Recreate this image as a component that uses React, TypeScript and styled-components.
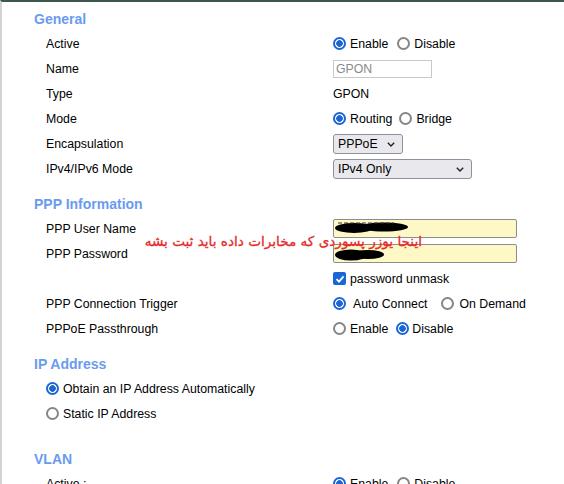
import styled, { createGlobalStyle } from "styled-components";

const GlobalStyle = createGlobalStyle`
    html, body {
        margin: 0;
        padding: 0;
        overflow: hidden;
        background: #ffffff;
    }
    body {
        font-family: "Liberation Sans", Arial, sans-serif;
        font-size: 12.3px;
        color: #000;
    }
`;

const Page = styled.div`
    height: 484px;
    box-sizing: border-box;
    border-top: 2px solid #3d5848;
    border-left: 2px solid #d3d3d3;
    padding: 5px 0 0 32px;
    overflow: hidden;
`;

const Section = styled.section<{ $after?: number }>`
    position: relative;
    margin-bottom: ${(p) => p.$after ?? 11}px;
`;

const Heading = styled.h2`
    margin: 0;
    height: 24px;
    line-height: 24px;
    font-size: 14px;
    font-weight: 700;
    color: #6a9bef;
`;

const Row = styled.div`
    display: grid;
    grid-template-columns: 287px 1fr;
    align-items: center;
    height: 25px;
    padding-left: 12px;
`;

const Label = styled.div`
    white-space: nowrap;
`;

const Value = styled.div`
    display: flex;
    align-items: center;
`;

const Choices = styled.div<{ $gap?: number }>`
    display: flex;
    align-items: center;
    gap: ${(p) => p.$gap ?? 9}px;
`;

const Option = styled.label<{ $gap?: number }>`
    display: inline-flex;
    align-items: center;
    gap: ${(p) => p.$gap ?? 4}px;
    white-space: nowrap;
`;

const Radio = styled.input.attrs({ type: "radio" })`
    appearance: none;
    box-sizing: border-box;
    width: 13px;
    height: 13px;
    margin: 0;
    border: 2px solid #858585;
    border-radius: 50%;
    background: #fff;

    &:checked {
        border-color: #1b66d6;
        background: radial-gradient(circle, #1b66d6 0 3px, #ffffff 3.6px);
    }
`;

const CheckBox = styled.span`
    display: inline-flex;
    align-items: center;
    justify-content: center;
    width: 13px;
    height: 13px;
    border-radius: 2px;
    background: #1b66d6;
`;

const TextField = styled.input`
    box-sizing: border-box;
    width: 99px;
    height: 18px;
    padding: 0 2px;
    border: 1px solid #c8c8c8;
    background: #fff;
    color: #8a8a8a;
    font: inherit;
`;

const FieldWrap = styled.div`
    position: relative;
    display: inline-block;
`;

const SecretField = styled.input`
    box-sizing: border-box;
    width: 184px;
    height: 19px;
    padding: 0 2px;
    border: 1px solid #8d8d8d;
    border-radius: 2px;
    background: #fdf8c6;
    font: inherit;
`;

const Scribble = styled.svg`
    position: absolute;
    left: 1px;
    top: 3px;
`;

const Select = styled.select<{ $width: number }>`
    appearance: none;
    box-sizing: border-box;
    width: ${(p) => p.$width}px;
    height: 20px;
    padding: 0 0 0 4px;
    border: 1px solid #8f8f9d;
    border-radius: 3px;
    background: #e9e9ed;
    color: #000;
    font: inherit;
`;

const Chevron = styled.svg`
    position: absolute;
    right: 8px;
    top: 8px;
    pointer-events: none;
`;

const OptionRow = styled.div`
    display: flex;
    align-items: center;
    height: 25px;
    padding-left: 12px;
`;

const Note = styled.div`
    position: absolute;
    top: 40px;
    right: 142px;
    direction: rtl;
    white-space: nowrap;
    font-family: "DejaVu Sans", "Noto Sans", sans-serif;
    font-size: 13.6px;
    line-height: 18px;
    color: #e42b2b;
    -webkit-text-stroke: 0.3px #e42b2b;
    pointer-events: none;
`;

function DropDown({ width, value }: { width: number; value: string }) {
    return (
        <FieldWrap>
            <Select $width={width} defaultValue={value}>
                <option>{value}</option>
            </Select>
            <Chevron width="8" height="5" viewBox="0 0 8 5">
                <path d="M0.8 0.8 L4 4 L7.2 0.8" fill="none" stroke="#222" strokeWidth="1.4"/>
            </Chevron>
        </FieldWrap>
    );
}

export default function App() {
    return (
        <>
            <GlobalStyle/>
            <Page>
                <Section>
                    <Heading>General</Heading>
                    <Row>
                        <Label>Active</Label>
                        <Value>
                            <Choices>
                                <Option><Radio name="active" defaultChecked/>Enable</Option>
                                <Option><Radio name="active"/>Disable</Option>
                            </Choices>
                        </Value>
                    </Row>
                    <Row>
                        <Label>Name</Label>
                        <Value><TextField defaultValue="GPON" disabled/></Value>
                    </Row>
                    <Row>
                        <Label>Type</Label>
                        <Value>GPON</Value>
                    </Row>
                    <Row>
                        <Label>Mode</Label>
                        <Value>
                            <Choices $gap={7}>
                                <Option><Radio name="mode" defaultChecked/>Routing</Option>
                                <Option><Radio name="mode"/>Bridge</Option>
                            </Choices>
                        </Value>
                    </Row>
                    <Row>
                        <Label>Encapsulation</Label>
                        <Value><DropDown width={70} value="PPPoE"/></Value>
                    </Row>
                    <Row>
                        <Label>IPv4/IPv6 Mode</Label>
                        <Value><DropDown width={139} value="IPv4 Only"/></Value>
                    </Row>
                </Section>

                <Section>
                    <Heading>PPP Information</Heading>
                    <Row>
                        <Label>PPP User Name</Label>
                        <Value>
                            <FieldWrap>
                                <SecretField/>
                                <Scribble width="76" height="12" viewBox="0 0 76 12">
                                    <ellipse cx="20" cy="6" rx="19" ry="5" fill="#000"/>
                                    <ellipse cx="50" cy="5" rx="24" ry="4.5" fill="#000"/>
                                    <path d="M4 1 H60" stroke="#333" strokeWidth="1" strokeDasharray="4 2"/>
                                </Scribble>
                            </FieldWrap>
                        </Value>
                    </Row>
                    <Row>
                        <Label>PPP Password</Label>
                        <Value>
                            <FieldWrap>
                                <SecretField/>
                                <Scribble width="54" height="13" viewBox="0 0 54 13" style={{top: 4}}>
                                    <ellipse cx="17" cy="7" rx="16" ry="5.5" fill="#000"/>
                                    <ellipse cx="34" cy="6.5" rx="16" ry="4.5" fill="#000"/>
                                </Scribble>
                            </FieldWrap>
                        </Value>
                    </Row>
                    <Row>
                        <Label/>
                        <Value>
                            <Option>
                                <CheckBox>
                                    <svg width="10" height="10" viewBox="0 0 10 10">
                                        <path d="M1.5 5.2 L4 7.6 L8.6 2.4" fill="none" stroke="#fff" strokeWidth="1.8"/>
                                    </svg>
                                </CheckBox>
                                password unmask
                            </Option>
                        </Value>
                    </Row>
                    <Row>
                        <Label>PPP Connection Trigger</Label>
                        <Value>
                            <Choices $gap={13}>
                                <Option $gap={7}><Radio name="trigger" defaultChecked/>Auto Connect</Option>
                                <Option $gap={6}><Radio name="trigger"/>On Demand</Option>
                            </Choices>
                        </Value>
                    </Row>
                    <Row>
                        <Label>PPPoE Passthrough</Label>
                        <Value>
                            <Choices $gap={8}>
                                <Option><Radio name="pass"/>Enable</Option>
                                <Option $gap={3}><Radio name="pass" defaultChecked/>Disable</Option>
                            </Choices>
                        </Value>
                    </Row>
                    <Note>اینجا یوزر پسوردی که مخابرات داده باید ثبت بشه</Note>
                </Section>

                <Section $after={21}>
                    <Heading>IP Address</Heading>
                    <OptionRow>
                        <Option><Radio name="ip" defaultChecked/>Obtain an IP Address Automatically</Option>
                    </OptionRow>
                    <OptionRow>
                        <Option><Radio name="ip"/>Static IP Address</Option>
                    </OptionRow>
                </Section>

                <Section>
                    <Heading>VLAN</Heading>
                    <Row>
                        <Label>Active :</Label>
                        <Value>
                            <Choices>
                                <Option><Radio name="vlan" defaultChecked/>Enable</Option>
                                <Option><Radio name="vlan"/>Disable</Option>
                            </Choices>
                        </Value>
                    </Row>
                </Section>
            </Page>
        </>
    );
}
